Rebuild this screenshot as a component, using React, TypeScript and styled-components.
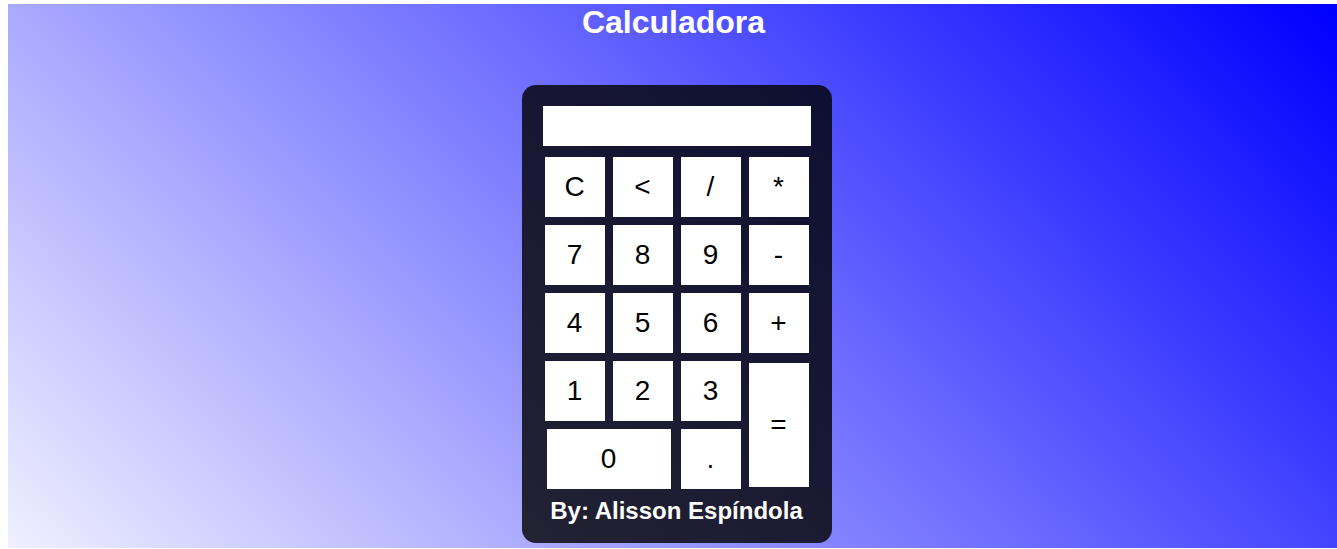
import React from "react";
import styled, { createGlobalStyle } from "styled-components";

const GlobalStyle = createGlobalStyle`
  html, body {
    margin: 0;
    padding: 0;
    overflow: hidden;
    background: #ffffff;
  }
  body {
    padding: 4px 0 0 8px;
    font-family: "Liberation Sans", Arial, sans-serif;
  }
`;

const Page = styled.main`
  width: 100vw;
  height: 544px;
  background: linear-gradient(45deg, #ffffff -6.5%, #0000ff 98.7%);
  display: flex;
  flex-direction: column;
  align-items: center;
`;

const Title = styled.h1`
  margin: 0 6px 0 0;
  font-size: 32px;
  font-weight: bold;
  line-height: 37px;
  color: #ffffff;
`;

const Calculator = styled.div`
  margin-top: 44px;
  width: 268px;
  padding: 21px 21px 18px;
  border-radius: 14px;
  background: rgba(0, 0, 0, 0.8);
  display: flex;
  flex-direction: column;
  align-items: center;
`;

const Display = styled.div`
  width: 268px;
  height: 40px;
  background: #ffffff;
  margin-bottom: 11px;
`;

const Keys = styled.div`
  display: grid;
  grid-template-columns: repeat(4, 60px);
  grid-auto-rows: 60px;
  gap: 8px;
`;

const Key = styled.button<{ $wide?: boolean; $tall?: boolean }>`
  border: none;
  padding: 0;
  margin: ${(p) => (p.$wide ? "0 2px" : p.$tall ? "2px 0" : "0")};
  background: #ffffff;
  color: #000000;
  font-family: "Liberation Sans", Arial, sans-serif;
  font-size: 28px;
  display: flex;
  align-items: center;
  justify-content: center;
  cursor: pointer;
  grid-column: ${(p) => (p.$wide ? "span 2" : "auto")};
  grid-row: ${(p) => (p.$tall ? "span 2" : "auto")};
`;

const Footer = styled.div`
  margin-top: 8px;
  font-size: 24px;
  font-weight: bold;
  line-height: 28px;
  color: #ffffff;
  white-space: nowrap;
`;

export default function App() {
  return (
    <>
      <GlobalStyle />
      <Page>
        <Title>Calculadora</Title>
        <Calculator>
          <Display />
          <Keys>
            <Key>C</Key>
            <Key>&lt;</Key>
            <Key>/</Key>
            <Key>*</Key>
            <Key>7</Key>
            <Key>8</Key>
            <Key>9</Key>
            <Key>-</Key>
            <Key>4</Key>
            <Key>5</Key>
            <Key>6</Key>
            <Key>+</Key>
            <Key>1</Key>
            <Key>2</Key>
            <Key>3</Key>
            <Key $tall>=</Key>
            <Key $wide>0</Key>
            <Key>.</Key>
          </Keys>
          <Footer>By: Alisson Espíndola</Footer>
        </Calculator>
      </Page>
    </>
  );
}
